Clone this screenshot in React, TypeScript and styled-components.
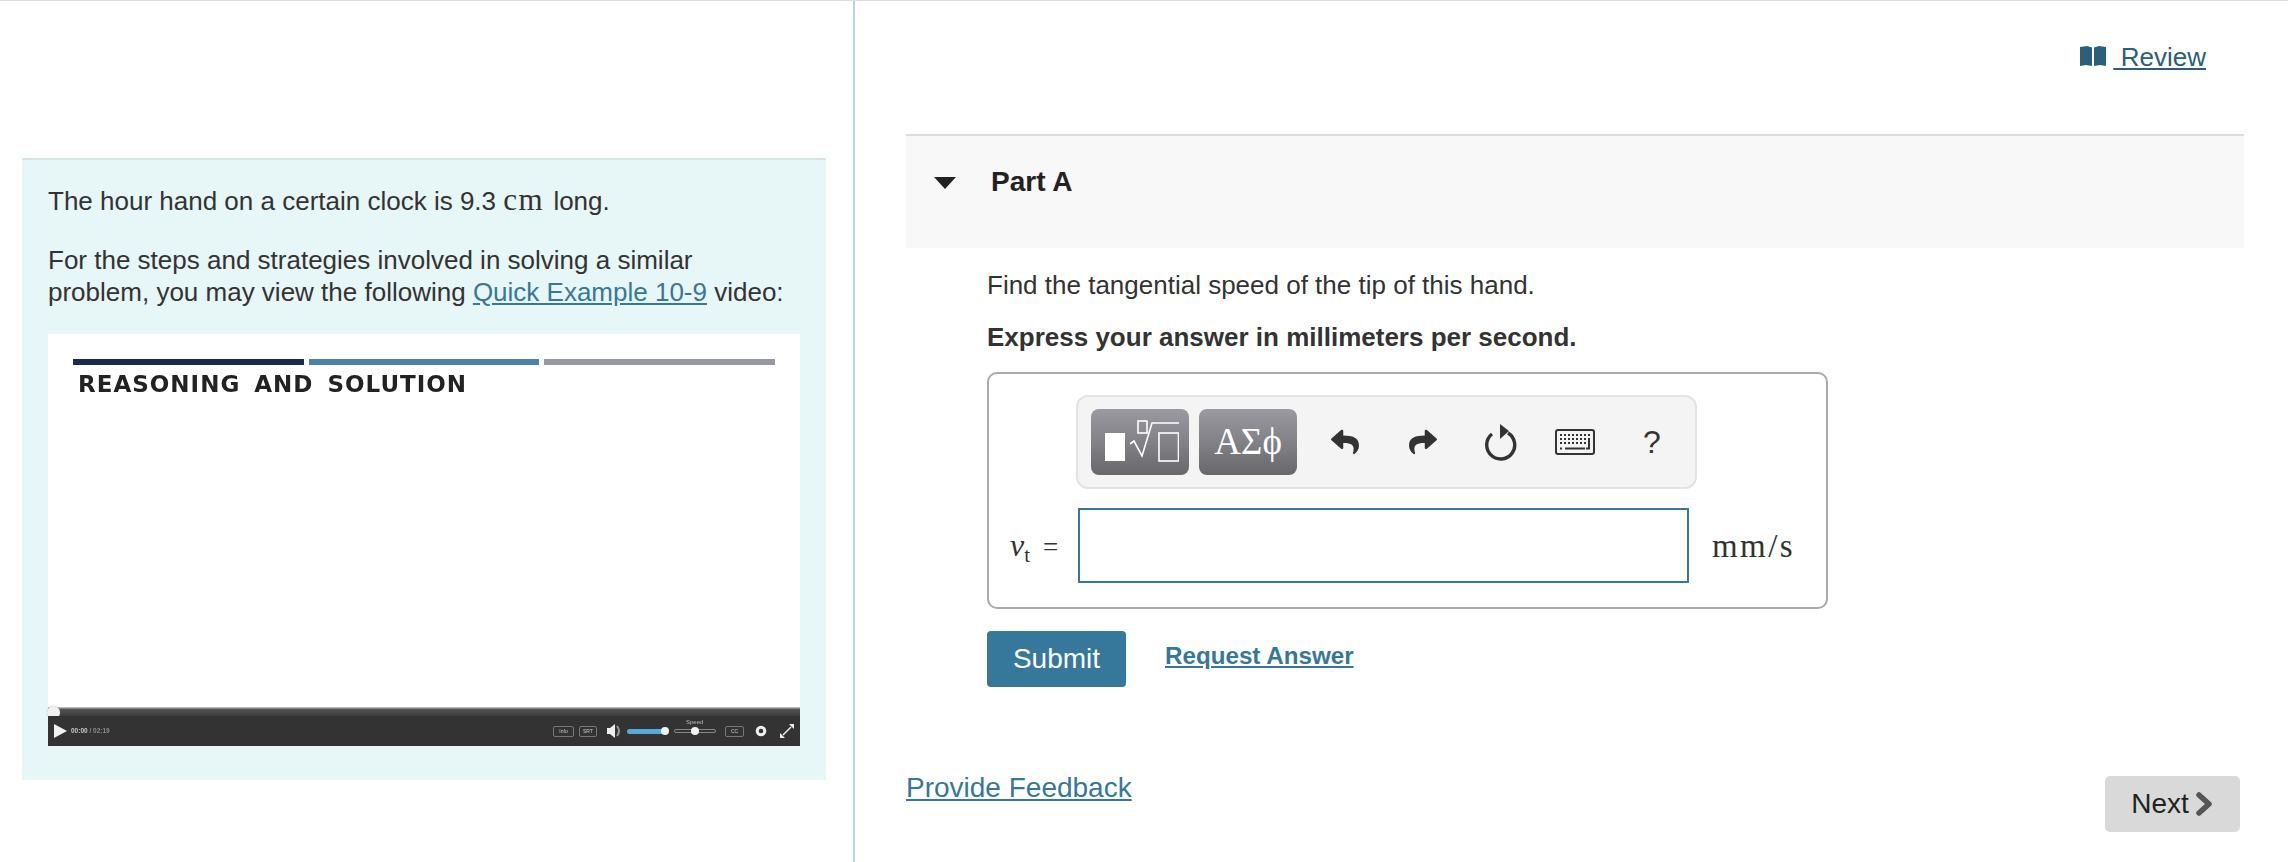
import React from 'react';
import styled, { createGlobalStyle } from 'styled-components';
import { FaReply, FaShare } from 'react-icons/fa';

const GlobalStyle = createGlobalStyle`
  html, body {
    margin: 0;
    padding: 0;
    background: #fff;
    color: #333;
    font-family: "Liberation Sans", Arial, sans-serif;
    font-size: 26px;
    line-height: 32px;
  }
`;

const Page = styled.div`
  display: flex;
  width: 2288px;
  height: 862px;
  box-sizing: border-box;
  border-top: 1px solid #ddd;
  overflow: hidden;
`;

const LeftColumn = styled.aside`
  width: 855px;
  flex: none;
  box-sizing: border-box;
  padding: 157px 27px 0 22px;
  border-right: 2px solid #bcd3de;
`;

const RightColumn = styled.main`
  flex: 1;
  min-width: 0;
  padding: 0 44px 0 51px;
`;

const ProblemPanel = styled.section`
  height: 622px;
  box-sizing: border-box;
  padding: 24px 26px 0;
  background: #e7f6f6;
  border-top: 2px solid #d9e4e4;
`;

const Paragraph = styled.p`
  margin: 0 0 27px;
`;

const Unit = styled.span`
  font-family: "Liberation Serif", serif;
  font-size: 31px;
  letter-spacing: 1.5px;
  margin-right: 2px;
`;

const TextLink = styled.a`
  color: #36789b;
  text-decoration: underline;
`;

const Video = styled.div`
  position: relative;
  width: 752px;
  height: 412px;
  display: flex;
  flex-direction: column;
  background: #fff;
  margin-top: -1px;
`;

const Slide = styled.div`
  flex: 1;
  padding: 25px 25px 0;
`;

const ProgressBars = styled.div`
  display: flex;
  gap: 5px;
`;

const ProgressBar = styled.div<{ $color: string }>`
  flex: 1;
  height: 6px;
  background: ${p => p.$color};
`;

const SlideTitle = styled.div`
  margin: 3px 0 0 5px;
  font-family: "DejaVu Sans", sans-serif;
  font-weight: 700;
  font-size: 23px;
  letter-spacing: 1px;
  word-spacing: 5px;
  line-height: 32px;
  color: #222;
  white-space: nowrap;
  filter: blur(0.4px);
`;

const Scrubber = styled.div`
  height: 9px;
  background: linear-gradient(#b5b5b5 0, #b5b5b5 1px, #555 2px, #3c3c3c 100%);
`;

const ScrubKnob = styled.span`
  position: absolute;
  left: -1px;
  bottom: 27px;
  width: 13px;
  height: 13px;
  border-radius: 50%;
  background: #f2f2f2;
  box-shadow: 0 0 1px #999;
`;

const Controls = styled.div`
  height: 30px;
  display: flex;
  align-items: center;
  padding: 0 6px 0 6px;
  background: #333;
  filter: blur(0.4px);
`;

const PlayIcon = styled.span`
  width: 0;
  height: 0;
  border-left: 13px solid #f2f2f2;
  border-top: 7px solid transparent;
  border-bottom: 7px solid transparent;
  margin-right: 4px;
`;

const TimeText = styled.span`
  flex: 1;
  font-size: 6.5px;
  line-height: 10px;
  color: #8d8d8d;
  font-weight: 700;
  b {
    color: #c9c9c9;
  }
`;

const TinyButton = styled.span<{ $width: number; $gap: number }>`
  width: ${p => p.$width}px;
  height: 11px;
  box-sizing: border-box;
  border: 1px solid #777;
  border-radius: 2px;
  margin-right: ${p => p.$gap}px;
  color: #ccc;
  font-size: 5px;
  line-height: 9px;
  text-align: center;
`;

const VolumeTrack = styled.span`
  position: relative;
  width: 40px;
  height: 5px;
  border-radius: 3px;
  background: #58a8d8;
  margin: 0 7px 0 5px;
`;

const SpeedTrack = styled.span`
  position: relative;
  width: 42px;
  height: 4px;
  border: 1px solid #888;
  box-sizing: border-box;
  border-radius: 3px;
  margin-right: 9px;
`;

const SliderKnob = styled.span<{ $left: number }>`
  position: absolute;
  left: ${p => p.$left}px;
  top: 50%;
  width: 8px;
  height: 8px;
  margin-top: -4px;
  border-radius: 50%;
  background: #f2f2f2;
`;

const SpeedLabel = styled.span`
  position: absolute;
  left: 11px;
  top: -12px;
  font-size: 6px;
  line-height: 8px;
  color: #bbb;
`;

const GearSlot = styled.span`
  width: 31px;
  box-sizing: border-box;
  padding-left: 6px;
  display: flex;
`;

const ReviewRow = styled.div`
  height: 133px;
  box-sizing: border-box;
  padding: 40px 38px 0 0;
  display: flex;
  justify-content: flex-end;
`;

const ReviewLink = styled.a`
  display: flex;
  align-items: flex-start;
  color: #2a6079;
  font-size: 26px;
  line-height: 32px;
  svg {
    margin: 5px 8px 0 0;
  }
  span {
    text-decoration: underline;
    white-space: pre;
  }
`;

const PartHeader = styled.header`
  height: 114px;
  box-sizing: border-box;
  display: flex;
  align-items: flex-start;
  padding: 30px 0 0 28px;
  background: #f8f8f8;
  border-top: 2px solid #ddd;
`;

const Caret = styled.span`
  width: 0;
  height: 0;
  margin: 11px 35px 0 0;
  border-top: 12px solid #222;
  border-left: 11px solid transparent;
  border-right: 11px solid transparent;
`;

const PartTitle = styled.h2`
  margin: 0;
  font-size: 28px;
  line-height: 32px;
  font-weight: 700;
  color: #222;
`;

const PartBody = styled.div`
  padding: 21px 0 0 81px;
`;

const Prompt = styled.p`
  margin: 0 0 20px;
`;

const Instruction = styled.p`
  margin: 0;
  font-weight: 700;
`;

const AnswerBox = styled.div`
  width: 841px;
  height: 237px;
  box-sizing: border-box;
  margin-top: 19px;
  padding: 21px 0 0 87px;
  border: 2px solid #aaa;
  border-radius: 10px;
`;

const Toolbar = styled.div`
  width: 621px;
  height: 94px;
  box-sizing: border-box;
  display: flex;
  align-items: center;
  padding: 0 0 0 13px;
  background: #f4f4f4;
  border: 2px solid #e3e3e3;
  border-radius: 12px;
`;

const PaletteButton = styled.div`
  width: 98px;
  height: 66px;
  margin-right: 10px;
  display: flex;
  align-items: center;
  justify-content: center;
  border-radius: 8px;
  background: linear-gradient(#9b9aa2, #68686b);
  color: #fff;
  font-family: "Liberation Serif", serif;
  font-size: 37px;
`;

const ToolIcon = styled.span<{ $width: number }>`
  width: ${p => p.$width}px;
  flex: none;
  display: flex;
  justify-content: center;
  color: #333;
`;

const HelpMark = styled.span`
  font-size: 32px;
  color: #333;
`;

const InputRow = styled.div`
  display: flex;
  align-items: center;
  margin: 19px 0 0 -87px;
`;

const VarLabel = styled.span`
  width: 89px;
  box-sizing: border-box;
  padding-left: 21px;
  font-family: "Liberation Serif", serif;
  font-size: 27px;
  white-space: nowrap;
  i {
    font-size: 32px;
  }
  sub {
    font-size: 21px;
    line-height: 0;
    margin-right: 13px;
  }
`;

const AnswerInput = styled.div`
  width: 611px;
  height: 75px;
  box-sizing: border-box;
  border: 2px solid #36789b;
  background: #fff;
`;

const UnitLabel = styled.span`
  margin-left: 23px;
  font-family: "Liberation Serif", serif;
  font-size: 33px;
  letter-spacing: 2.4px;
`;

const ActionRow = styled.div`
  display: flex;
  align-items: flex-start;
  gap: 39px;
  margin-top: 22px;
`;

const SubmitButton = styled.button`
  width: 139px;
  height: 56px;
  padding: 0;
  border: 0;
  border-radius: 4px;
  background: #36789b;
  color: #fff;
  font-family: inherit;
  font-size: 28px;
`;

const RequestLink = styled(TextLink)`
  font-weight: 700;
  font-size: 24.2px;
  line-height: 50px;
`;

const Footer = styled.footer`
  display: flex;
  justify-content: space-between;
  align-items: flex-start;
  margin-top: 85px;
  padding-right: 4px;
`;

const FeedbackLink = styled(TextLink)`
  font-size: 28px;
`;

const NextButton = styled.button`
  width: 135px;
  height: 56px;
  margin-top: 4px;
  padding: 0;
  display: flex;
  align-items: center;
  justify-content: center;
  gap: 6px;
  border: 0;
  border-radius: 5px;
  background: #d9d9d9;
  color: #222;
  font-family: inherit;
  font-size: 28px;
`;

const RootSvg = styled.svg`
  margin: -3px 0 0 4px;
`;

const RootIcon = () => (
  <RootSvg width="74" height="42" viewBox="0 0 74 42">
    <rect x="0" y="13" width="20" height="28" fill="#fff" />
    <rect x="33" y="1" width="9" height="12" fill="none" stroke="#fff" strokeWidth="1.6" />
    <path d="M25 24 L29 21 L37 36 L47 3 L74 3" fill="none" stroke="#fff" strokeWidth="1.6" />
    <rect x="54" y="13" width="19.5" height="28" fill="none" stroke="#fff" strokeWidth="1.6" />
  </RootSvg>
);

const ReloadIcon = () => (
  <svg width="34" height="38" viewBox="0 0 34 38">
    <path d="M24 10 A14 14 0 1 1 8 11" fill="none" stroke="#333" strokeWidth="3.4" />
    <path d="M16 1 L25 8 L16 16 Z" fill="#333" />
  </svg>
);

const KeyboardIcon = () => (
  <svg width="40" height="26" viewBox="0 0 40 26">
    <rect x="1" y="1" width="38" height="24" rx="2" fill="#f4f4f4" stroke="#333" strokeWidth="2" />
    <path d="M5 6 H35 M5 10 H35 M5 14 H31" stroke="#333" strokeWidth="2" strokeDasharray="2 2" />
    <path d="M10 19.5 H30 M34 11 V19.5 H31" fill="none" stroke="#333" strokeWidth="2" />
    <path d="M5 19.5 H7" stroke="#333" strokeWidth="2" />
  </svg>
);

const BookIcon = () => (
  <svg width="26" height="21" viewBox="0 0 26 21">
    <path d="M0 1 L7 0 L12 1.5 V20 L6 19 L0 20 Z" fill="#2a6079" />
    <path d="M26 1 L19 0 L14 1.5 V20 L20 19 L26 20 Z" fill="#2a6079" />
  </svg>
);

const ChevronIcon = () => (
  <svg width="19" height="24" viewBox="0 0 19 24">
    <path d="M4 3 L14 12 L4 21" fill="none" stroke="#555" strokeWidth="5.5" strokeLinecap="round" strokeLinejoin="round" />
  </svg>
);

const VolumeIcon = () => (
  <svg width="15" height="14" viewBox="0 0 15 14">
    <path d="M0 4 H3 L8 0 V14 L3 10 H0 Z" fill="#eee" />
    <path d="M10 2 Q14 7 10 12" fill="none" stroke="#999" strokeWidth="2" />
  </svg>
);

const GearIcon = () => (
  <svg width="12" height="12" viewBox="0 0 12 12">
    <circle cx="6" cy="6" r="3.8" fill="none" stroke="#eee" strokeWidth="3" />
  </svg>
);

const ExpandIcon = () => (
  <svg width="14" height="14" viewBox="0 0 14 14">
    <path d="M3 11 L11 3" stroke="#eee" strokeWidth="1.5" />
    <path d="M0 14 V9 L5 14 Z M14 0 V5 L9 0 Z" fill="#eee" />
  </svg>
);

const App: React.FC = () => (
  <>
    <GlobalStyle />
    <Page>
      <LeftColumn>
        <ProblemPanel>
          <Paragraph>
            The hour hand on a certain clock is 9.3 <Unit>cm</Unit> long.
          </Paragraph>
          <Paragraph>
            For the steps and strategies involved in solving a similar problem, you may view the
            following <TextLink href="#">Quick Example 10-9</TextLink> video:
          </Paragraph>
          <Video>
            <Slide>
              <ProgressBars>
                <ProgressBar $color="#1c2b4d" />
                <ProgressBar $color="#4d82a8" />
                <ProgressBar $color="#96999f" />
              </ProgressBars>
              <SlideTitle>REASONING AND SOLUTION</SlideTitle>
            </Slide>
            <Scrubber />
            <ScrubKnob />
            <Controls>
              <PlayIcon />
              <TimeText><b>00:00</b> / 02:19</TimeText>
              <TinyButton $width={21} $gap={5}>Info</TinyButton>
              <TinyButton $width={18} $gap={10}>SRT</TinyButton>
              <VolumeIcon />
              <VolumeTrack><SliderKnob $left={34} /></VolumeTrack>
              <SpeedTrack>
                <SpeedLabel>Speed</SpeedLabel>
                <SliderKnob $left={16} />
              </SpeedTrack>
              <TinyButton $width={19} $gap={5}>CC</TinyButton>
              <GearSlot><GearIcon /></GearSlot>
              <ExpandIcon />
            </Controls>
          </Video>
        </ProblemPanel>
      </LeftColumn>
      <RightColumn>
        <ReviewRow>
          <ReviewLink href="#">
            <BookIcon />
            <span> Review</span>
          </ReviewLink>
        </ReviewRow>
        <PartHeader>
          <Caret />
          <PartTitle>Part A</PartTitle>
        </PartHeader>
        <PartBody>
          <Prompt>Find the tangential speed of the tip of this hand.</Prompt>
          <Instruction>Express your answer in millimeters per second.</Instruction>
          <AnswerBox>
            <Toolbar>
              <PaletteButton><RootIcon /></PaletteButton>
              <PaletteButton>ΑΣϕ</PaletteButton>
              <ToolIcon $width={76}><FaReply size={28} /></ToolIcon>
              <ToolIcon $width={80}><FaShare size={28} /></ToolIcon>
              <ToolIcon $width={76}><ReloadIcon /></ToolIcon>
              <ToolIcon $width={72}><KeyboardIcon /></ToolIcon>
              <ToolIcon $width={82}><HelpMark>?</HelpMark></ToolIcon>
            </Toolbar>
            <InputRow>
              <VarLabel><i>v</i><sub>t</sub>=</VarLabel>
              <AnswerInput />
              <UnitLabel>mm/s</UnitLabel>
            </InputRow>
          </AnswerBox>
          <ActionRow>
            <SubmitButton>Submit</SubmitButton>
            <RequestLink href="#">Request Answer</RequestLink>
          </ActionRow>
        </PartBody>
        <Footer>
          <FeedbackLink href="#">Provide Feedback</FeedbackLink>
          <NextButton>Next<ChevronIcon /></NextButton>
        </Footer>
      </RightColumn>
    </Page>
  </>
);

export default App;
